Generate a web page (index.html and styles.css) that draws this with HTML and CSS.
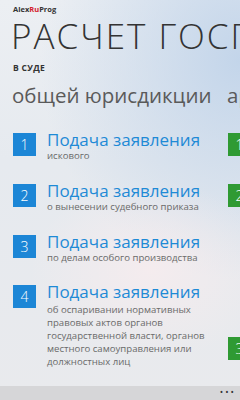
FILE: index.html
```html
<!DOCTYPE html>
<html>
<head>
  <meta charset="UTF-8">
  <title>AlexRuProg // Госпошлина</title>
  <link rel="stylesheet" href="styles.css">
</head>
<body>

  <!-- Панорама -->
  <div class="pano">
    <div class="brand">Alex<span class="ru">Ru</span>Prog</div>
    <h1 class="title">РАСЧЕТ ГОСПОШЛИНЫ</h1>
    <div class="caption">В СУДЕ</div>

    <div class="sections">
      <section class="col">
        <h2>общей юрисдикции</h2>
        <div class="item">
          <div class="tile">1</div>
          <div class="text">
            <div class="head">Подача заявления</div>
            <div class="desc">искового</div>
          </div>
        </div>
        <div class="item">
          <div class="tile">2</div>
          <div class="text">
            <div class="head">Подача заявления</div>
            <div class="desc">о вынесении судебного приказа</div>
          </div>
        </div>
        <div class="item">
          <div class="tile">3</div>
          <div class="text">
            <div class="head">Подача заявления</div>
            <div class="desc">по делам особого производства</div>
          </div>
        </div>
        <div class="item">
          <div class="tile">4</div>
          <div class="text">
            <div class="head">Подача заявления</div>
            <div class="desc">об оспаривании нормативных правовых актов органов государственной власти, органов местного самоуправления или должностных лиц</div>
          </div>
        </div>
      </section>

      <section class="col arb">
        <h2>арбитражный</h2>
        <div class="item">
          <div class="tile">1</div>
          <div class="text">
            <div class="head">Подача заявления</div>
            <div class="desc">искового</div>
          </div>
        </div>
        <div class="item">
          <div class="tile">2</div>
          <div class="text">
            <div class="head">Подача заявления</div>
            <div class="desc">о признании ненормативного правового акта недействительным, о признании решений и действий (бездействия) государственных органов, органов местного самоуправления, иных органов и должностных лиц незаконными, о признании права собственности</div>
          </div>
        </div>
        <div class="item">
          <div class="tile">3</div>
          <div class="text">
            <div class="head">Подача заявления</div>
            <div class="desc">о признании должника банкротом</div>
          </div>
        </div>
      </section>
    </div>
  </div>

  <!-- Панель приложения -->
  <div class="appbar">&bull;&bull;&bull;</div>

</body>
</html>
```

FILE: styles.css
```css
* {
  box-sizing: border-box;
}

body, html {
  margin: 0;
  padding: 0;
  width: 240px;
  height: 400px;
  overflow: hidden;
  font-family: "Open Sans", "DejaVu Sans", sans-serif;
  color: #333;
}

body {
  position: relative;
  background:
    radial-gradient(ellipse 120px 90px at 150px 270px, rgba(246, 236, 238, 0.9), rgba(246, 236, 238, 0)),
    radial-gradient(ellipse 200px 220px at 240px 60px, #c3d5ea, rgba(195, 213, 234, 0)),
    linear-gradient(180deg, #eceff3 0%, #e6eaef 40%, #e9eaed 100%);
}

/* Заголовок панорамы */
.pano {
  height: 386px;
  padding: 5px 0 0 13px;
  overflow: hidden;
  white-space: nowrap;
}

.brand {
  font-size: 7.5px;
  font-weight: 700;
  line-height: 9px;
  color: #333;
}

.brand .ru {
  color: #d4202c;
}

.title {
  margin: 0 0 0 -2px;
  font-size: 35px;
  font-weight: 300;
  line-height: 44px;
  letter-spacing: 2px;
  color: #333;
}

.caption {
  margin-top: 5px;
  font-size: 8.5px;
  font-weight: 700;
  line-height: 10px;
  letter-spacing: 0.3px;
}

/* Разделы */
.sections {
  display: flex;
  margin-top: 8px;
}

.col {
  flex: 0 0 215px;
}

.col h2 {
  margin: 0 0 21px -1px;
  font-size: 20.5px;
  font-weight: 400;
  line-height: 28px;
  color: #5a5a5a;
}

.item {
  display: flex;
  gap: 11px;
  margin-bottom: 18px;
}

.tile {
  flex: 0 0 23px;
  height: 23px;
  margin-top: 3px;
  background-color: #1c86d6;
  color: white;
  font-size: 14px;
  font-weight: 300;
  line-height: 23px;
  text-align: center;
}

.arb .tile {
  background-color: #2f9a33;
}

.text {
  width: 166px;
  white-space: normal;
}

.head {
  font-size: 17px;
  line-height: 20px;
  color: #1e8ad6;
  white-space: nowrap;
}

.desc {
  font-size: 9.6px;
  line-height: 12.8px;
  color: #6a6a6a;
}

.item:last-child .desc {
  margin-top: 2px;
}

/* Панель приложения */
.appbar {
  position: absolute;
  left: 0;
  right: 0;
  bottom: 0;
  height: 14px;
  padding-right: 4px;
  background-color: #d6d6d8;
  color: #333;
  font-size: 9px;
  line-height: 12px;
  letter-spacing: 2px;
  text-align: right;
}
```
